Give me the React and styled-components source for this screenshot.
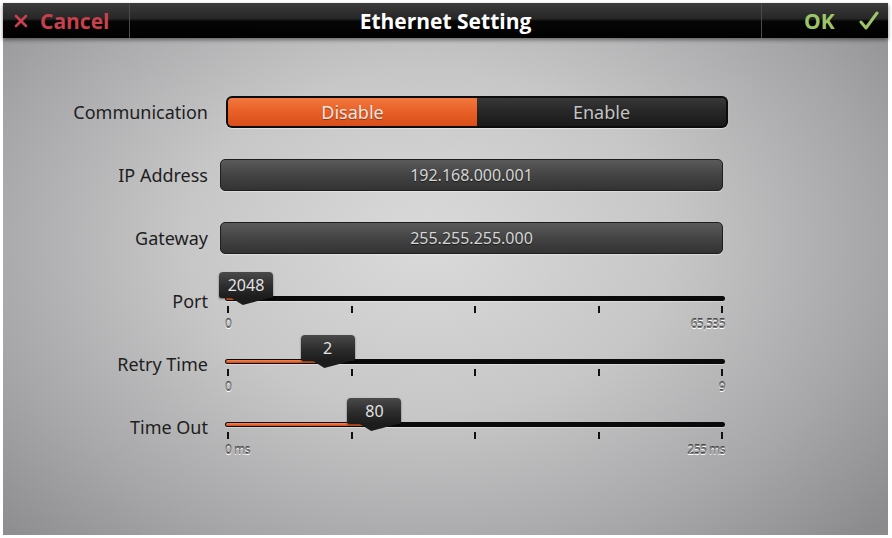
import React from "react";
import styled, { createGlobalStyle } from "styled-components";

const GlobalStyle = createGlobalStyle`
   html, body {
      margin: 0;
      padding: 0;
      background: #ffffff;
   }
   body {
      font-family: "Noto Sans", "Open Sans", sans-serif;
   }
`;

const Frame = styled.div`
   width: 892px;
   height: 538px;
   padding: 3px 4px 3px 3px;
   box-sizing: border-box;
   background: #ffffff;
`;

const Screen = styled.div`
   width: 100%;
   height: 100%;
   display: flex;
   flex-direction: column;
   background: radial-gradient(
      ellipse 68% 80% at 48% 45%,
      #dadada 0%,
      #c7c7c8 40%,
      #a6a6a8 75%,
      #8b8b8e 100%
   );
`;

const Header = styled.div`
   height: 35px;
   display: grid;
   grid-template-columns: 127px 1fr 127px;
   background: linear-gradient(
      to bottom,
      #3c3c3c 0%,
      #262626 45%,
      #060606 52%,
      #000000 100%
   );
   box-shadow: 0 2px 4px rgba(0, 0, 0, 0.45);
`;

const HeadCell = styled.div`
   display: flex;
   align-items: center;
   justify-content: ${(props) => props.align || "center"};
   padding: ${(props) => props.pad || "0"};
   gap: ${(props) => props.gap || "0"};
   border-left: ${(props) => (props.left ? "1px solid #4a4a4a" : "none")};
   border-right: ${(props) => (props.right ? "1px solid #4a4a4a" : "none")};
   font-family: "Open Sans", "Noto Sans", sans-serif;
   font-weight: 700;
   font-size: 21px;
   color: ${(props) => props.color || "#ffffff"};
   letter-spacing: 0;
`;

const Form = styled.div`
   display: flex;
   flex-direction: column;
   padding-top: 42px;
`;

const Row = styled.div`
   height: 63px;
   display: grid;
   grid-template-columns: 205px 1fr;
   align-items: center;
`;

const Label = styled.div`
   text-align: right;
   font-size: 18px;
   color: #1e1e1e;
   letter-spacing: 0;
`;

const Toggle = styled.div`
   margin-left: 18px;
   width: 502px;
   height: 32px;
   box-sizing: border-box;
   display: flex;
   padding: 2px;
   border-radius: 6px;
   background: #0c0c0c;
   box-shadow: 0 1px 1px rgba(255, 255, 255, 0.5);
`;

const ToggleOption = styled.div`
   flex: 1;
   display: flex;
   align-items: center;
   justify-content: center;
   border-radius: ${(props) => (props.first ? "4px 0 0 4px" : "0 4px 4px 0")};
   font-size: 18px;
   color: ${(props) => (props.active ? "#f6e8e0" : "#c4c4c4")};
   background: ${(props) =>
      props.active
         ? "linear-gradient(to bottom, #f2783e 0%, #e85f26 50%, #d94e1a 100%)"
         : "linear-gradient(to bottom, #383838 0%, #262626 50%, #1a1a1a 100%)"};
   text-shadow: 0 1px 1px rgba(0, 0, 0, 0.4);
`;

const Field = styled.div`
   margin-left: 12px;
   width: 503px;
   height: 32px;
   box-sizing: border-box;
   display: flex;
   align-items: center;
   justify-content: center;
   border: 1px solid #1e1e1e;
   border-radius: 5px;
   background: linear-gradient(to bottom, #5a5a5a 0%, #444444 50%, #333333 100%);
   font-size: 16px;
   color: #d6d6d6;
   text-shadow: 0 1px 1px rgba(0, 0, 0, 0.6);
   box-shadow: 0 1px 1px rgba(255, 255, 255, 0.4);
`;

const Slider = styled.div`
   position: relative;
   margin-left: 17px;
   width: 500px;
   height: 63px;
   display: flex;
   flex-direction: column;
   padding-top: 27px;
   box-sizing: border-box;
`;

const Track = styled.div`
   position: relative;
   height: 8px;
   border-radius: 4px;
   background: #0a0a0a;
   box-shadow: 0 1px 0 rgba(255, 255, 255, 0.35);
`;

const Fill = styled.div`
   position: absolute;
   left: 1px;
   top: 1px;
   bottom: 1px;
   border-radius: 3px;
   background: linear-gradient(to bottom, #f58a52 0%, #e8602a 60%, #c84a18 100%);
`;

const Ticks = styled.div`
   display: flex;
   justify-content: space-between;
   padding: 0 2px;
   margin-top: 5px;
`;

const Tick = styled.span`
   width: 2px;
   height: 7px;
   background: #111;
`;

const Ends = styled.div`
   display: flex;
   justify-content: space-between;
   margin-top: 2px;
   font-size: 12px;
   color: #7c7c7c;
   letter-spacing: -0.5px;
   text-shadow: 0 1px 0 #ffffff, 0 -1px 0 #4a4a4a;
`;

const Bubble = styled.div`
   position: absolute;
   top: 3px;
   width: 54px;
   height: 26px;
   display: flex;
   align-items: center;
   justify-content: center;
   border-radius: 4px 4px 2px 2px;
   background: linear-gradient(to bottom, #4a4a4a 0%, #2c2c2c 55%, #1c1c1c 100%);
   box-shadow: 0 1px 2px rgba(0, 0, 0, 0.5);
   font-size: 16px;
   color: #e2e2e2;

   &::after {
      content: "";
      position: absolute;
      left: 0;
      bottom: -7px;
      width: 54px;
      height: 8px;
      background: #1c1c1c;
      clip-path: polygon(0 0, 100% 0, 44% 100%, 20% 0);
   }
`;

const SliderRow = ({ label, value, max, shown, minText, maxText }) => {
   const pct = value / max;
   const fillW = Math.max(pct * 498, 18);
   return (
      <Row>
         <Label>{label}</Label>
         <Slider>
            <Track>
               <Fill style={{ width: fillW }} />
            </Track>
            <Ticks>
               {[0, 1, 2, 3, 4].map((i) => (
                  <Tick key={i} />
               ))}
            </Ticks>
            <Ends>
               <span>{minText}</span>
               <span>{maxText}</span>
            </Ends>
            <Bubble style={{ left: fillW - 24 }}>{shown}</Bubble>
         </Slider>
      </Row>
   );
};

const CheckIcon = () => (
   <svg width="20" height="20" viewBox="0 0 20 20">
      <path d="M2 11 L7 17 L18 2" fill="none" stroke="#9ec468" strokeWidth="3" strokeLinecap="round" strokeLinejoin="round" />
   </svg>
);

const CrossIcon = () => (
   <svg width="14" height="14" viewBox="0 0 14 14">
      <path d="M2 2 L12 12 M12 2 L2 12" stroke="#c8404c" strokeWidth="2.6" strokeLinecap="round" />
   </svg>
);

export default function App() {
   return (
      <Frame>
         <GlobalStyle />
         <Screen>
            <Header>
               <HeadCell align="flex-start" pad="0 0 0 11px" gap="12px" color="#c8404c" right>
                  <CrossIcon />
                  Cancel
               </HeadCell>
               <HeadCell>Ethernet Setting</HeadCell>
               <HeadCell align="flex-start" pad="0 0 0 42px" gap="24px" color="#9ec468" left>
                  OK
                  <CheckIcon />
               </HeadCell>
            </Header>
            <Form>
               <Row>
                  <Label>Communication</Label>
                  <Toggle>
                     <ToggleOption first active>Disable</ToggleOption>
                     <ToggleOption>Enable</ToggleOption>
                  </Toggle>
               </Row>
               <Row>
                  <Label>IP Address</Label>
                  <Field>192.168.000.001</Field>
               </Row>
               <Row>
                  <Label>Gateway</Label>
                  <Field>255.255.255.000</Field>
               </Row>
               <SliderRow label="Port" value={2048} max={65535} shown="2048" minText="0" maxText="65,535" />
               <SliderRow label="Retry Time" value={2} max={10} shown="2" minText="0" maxText="9" />
               <SliderRow label="Time Out" value={80} max={272} shown="80" minText="0 ms" maxText="255 ms" />
            </Form>
         </Screen>
      </Frame>
   );
}
